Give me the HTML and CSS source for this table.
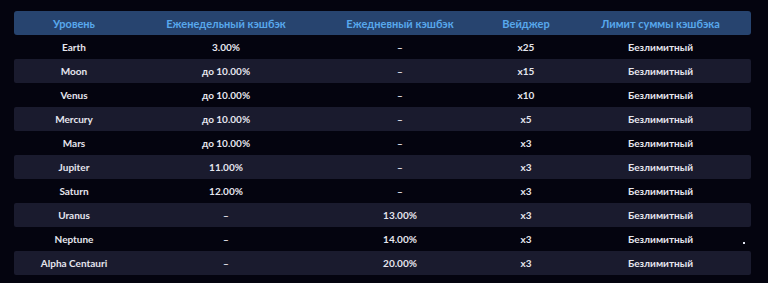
FILE: index.html
```html
<!DOCTYPE html>
<html lang="ru">
<head>
<meta charset="utf-8">
<link rel="stylesheet" href="styles.css">
</head>
<body>
<div class="wrap">
  <table class="levels">
    <colgroup>
      <col class="c1"><col class="c2"><col class="c3"><col class="c4"><col class="c5">
    </colgroup>
    <thead>
      <tr><th>Уровень</th><th>Еженедельный кэшбэк</th><th>Ежедневный кэшбэк</th><th>Вейджер</th><th>Лимит суммы кэшбэка</th></tr>
    </thead>
    <tbody>
      <tr><td>Earth</td><td>3.00%</td><td>–</td><td>x25</td><td>Безлимитный</td></tr>
      <tr><td>Moon</td><td>до 10.00%</td><td>–</td><td>x15</td><td>Безлимитный</td></tr>
      <tr><td>Venus</td><td>до 10.00%</td><td>–</td><td>x10</td><td>Безлимитный</td></tr>
      <tr><td>Mercury</td><td>до 10.00%</td><td>–</td><td>x5</td><td>Безлимитный</td></tr>
      <tr><td>Mars</td><td>до 10.00%</td><td>–</td><td>x3</td><td>Безлимитный</td></tr>
      <tr><td>Jupiter</td><td>11.00%</td><td>–</td><td>x3</td><td>Безлимитный</td></tr>
      <tr><td>Saturn</td><td>12.00%</td><td>–</td><td>x3</td><td>Безлимитный</td></tr>
      <tr><td>Uranus</td><td>–</td><td>13.00%</td><td>x3</td><td>Безлимитный</td></tr>
      <tr><td>Neptune</td><td>–</td><td>14.00%</td><td>x3</td><td>Безлимитный</td></tr>
      <tr><td>Alpha Centauri</td><td>–</td><td>20.00%</td><td>x3</td><td>Безлимитный</td></tr>
    </tbody>
  </table>
  <span class="dot"></span>
</div>
</body>
</html>
```
FILE: styles.css
```css
html, body {
  margin: 0;
  padding: 0;
  background: #04040f;
}
body {
  width: 768px;
  height: 283px;
  overflow: hidden;
  font-family: Lato, "Noto Sans", sans-serif;
}
.wrap {
  position: relative;
  padding: 11px 0 0 14px;
}
.levels {
  width: 737px;
  table-layout: fixed;
  border-collapse: separate;
  border-spacing: 0;
}
.c1 { width: 120px; }
.c2 { width: 184px; }
.c3 { width: 164px; }
.c4 { width: 88px; }
.c5 { width: 181px; }
.levels th {
  height: 24px;
  padding: 0;
  background: #27446f;
  color: #58a8ec;
  font-size: 11px;
  font-weight: 700;
  text-align: center;
}
.levels th:first-child { border-radius: 3px 0 0 3px; }
.levels th:last-child { border-radius: 0 3px 3px 0; }
.levels td {
  height: 24px;
  padding: 0;
  color: #e6e6ee;
  font-size: 10px;
  font-weight: 700;
  text-align: center;
}
.levels tbody tr:nth-child(even) td { background: #1a1b2e; }
.levels tbody tr:nth-child(even) td:first-child { border-radius: 2px 0 0 2px; }
.levels tbody tr:nth-child(even) td:last-child { border-radius: 0 2px 2px 0; }
.dot {
  position: absolute;
  left: 743px;
  top: 242px;
  width: 2px;
  height: 2px;
  background: #dfe3f0;
}
```
